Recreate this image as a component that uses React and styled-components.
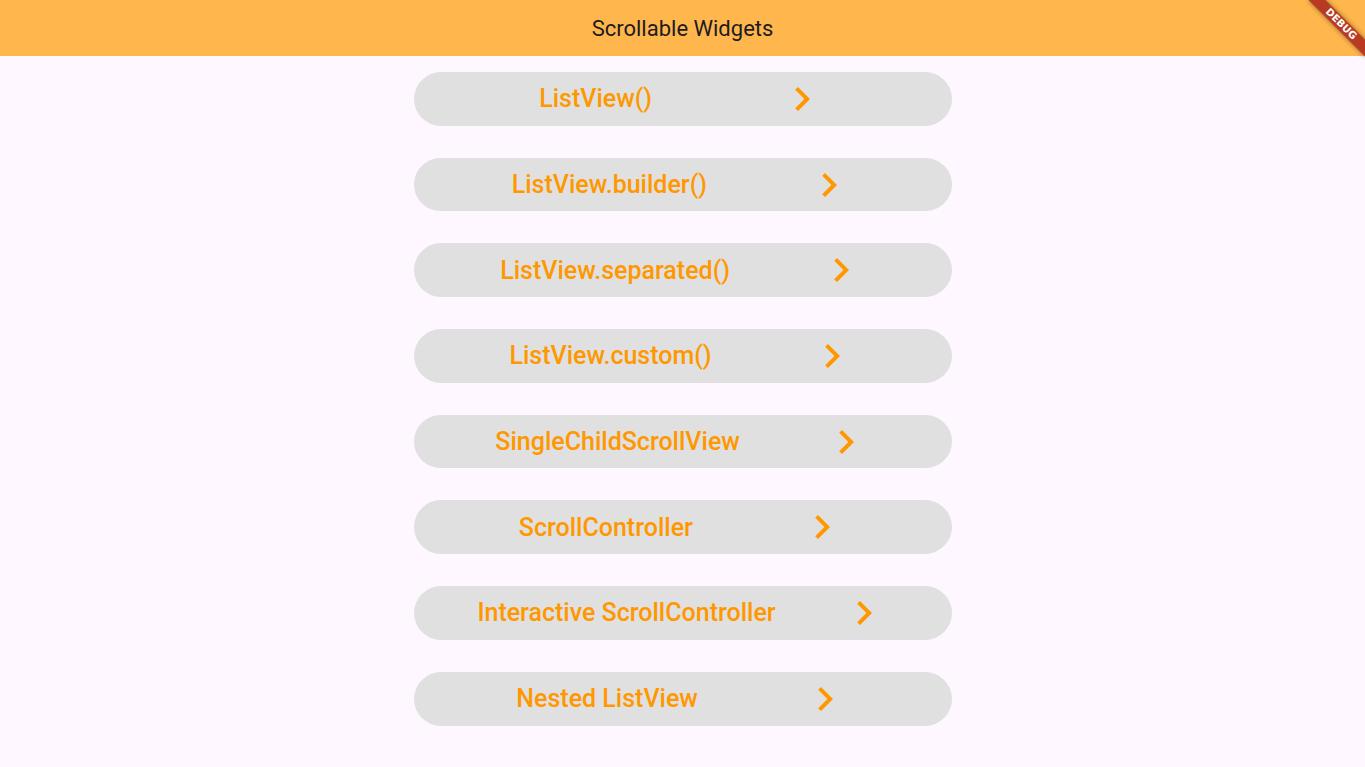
import React from "react"
import styled, { createGlobalStyle } from "styled-components"

const GlobalStyle = createGlobalStyle`
  html, body {
    margin: 0;
    padding: 0;
    background: #fef7ff;
    font-family: Roboto, "Noto Sans", sans-serif;
  }
`

const Page = styled.div`
  position: relative;
  min-height: 767px;
  overflow: hidden;
  background: #fef7ff;
`

const AppBar = styled.header`
  height: 56px;
  background: #ffb74d;
  display: flex;
  align-items: center;
  justify-content: center;
  font-size: 22px;
  color: #1d1b20;
  letter-spacing: 0;
`

const List = styled.div`
  display: flex;
  flex-direction: column;
  align-items: center;
  gap: 32px;
  padding-top: 16px;
`

const Item = styled.div`
  width: 538px;
  height: 53.7px;
  border-radius: 27px;
  background: #e0e0e0;
  display: flex;
  align-items: center;
  justify-content: space-evenly;
`

const Label = styled.span`
  font-size: 25px;
  font-weight: 500;
  color: #ff9800;
  white-space: nowrap;
`

const Banner = styled.div`
  position: absolute;
  top: 18px;
  right: -16px;
  width: 80px;
  height: 12px;
  transform: rotate(45deg);
  background: rgba(170, 30, 24, 0.82);
  box-shadow: 0 0 5px rgba(0, 0, 0, 0.45);
  color: #fff;
  font-size: 10px;
  font-weight: 900;
  line-height: 12px;
  text-align: center;
  font-family: "DejaVu Sans", sans-serif;
`

const Chevron = () => (
  <svg width="48" height="48" viewBox="0 0 24 24">
    <path d="M10 6L8.59 7.41 13.17 12l-4.58 4.59L10 18l6-6z" fill="#ff9800" />
  </svg>
)

const items = [
  "ListView()",
  "ListView.builder()",
  "ListView.separated()",
  "ListView.custom()",
  "SingleChildScrollView",
  "ScrollController",
  "Interactive ScrollController",
  "Nested ListView",
]

export default function App() {
  return (
    <Page>
      <GlobalStyle />
      <AppBar>Scrollable Widgets</AppBar>
      <List>
        {items.map((name) => (
          <Item key={name}>
            <Label>{name}</Label>
            <Chevron />
          </Item>
        ))}
      </List>
      <Banner>DEBUG</Banner>
    </Page>
  )
}
